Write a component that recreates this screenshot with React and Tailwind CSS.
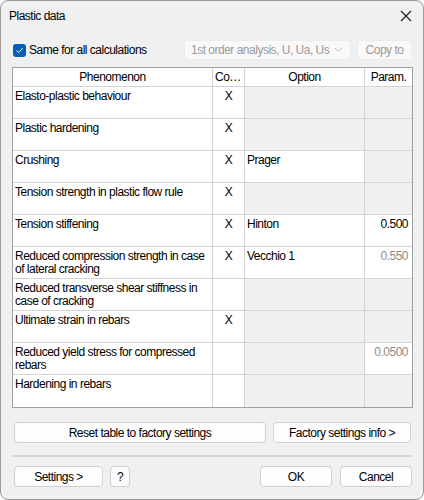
import React from "react";

const rows = [
  { name: "Elasto-plastic behaviour", co: true, option: null, param: null },
  { name: "Plastic hardening", co: true, option: null, param: null },
  { name: "Crushing", co: true, option: "Prager", param: null },
  { name: "Tension strength in plastic flow rule", co: true, option: null, param: null },
  { name: "Tension stiffening", co: true, option: "Hinton", param: "0.500" },
  { name: "Reduced compression strength in case of lateral cracking", co: true, option: "Vecchio 1", param: "0.550", paramDim: true },
  { name: "Reduced transverse shear stiffness in case of cracking", co: false, option: null, param: null },
  { name: "Ultimate strain in rebars", co: true, option: null, param: null },
  { name: "Reduced yield stress for compressed rebars", co: false, option: null, param: "0.0500", paramDim: true },
  { name: "Hardening in rebars", co: false, option: null, param: null },
];

const Btn = ({ children, className = "" }) => (
  <button className={`h-[21px] bg-[#fdfdfd] border border-[#d0d0d0] rounded-[4px] text-[12px] text-black leading-none ${className}`}>
    {children}
  </button>
);

export default function App() {
  return (
    <div className="w-[424px] h-[500px] bg-white tracking-[-0.5px]" style={{ fontFamily: '"Liberation Sans", Arial, sans-serif' }}>
      <div className="w-full h-full bg-[#f0f0f0] border border-[#9a9a9a] rounded-[8px] flex flex-col overflow-hidden">
        {/* title bar */}
        <div className="h-[30px] flex items-center justify-between pl-[8px] pr-[10px] shrink-0">
          <span className="text-[12px] text-black">Plastic data</span>
          <svg width="12" height="12" viewBox="0 0 12 12" className="mr-[1px]">
            <path d="M1 1 L11 11 M11 1 L1 11" stroke="#1a1a1a" strokeWidth="1.1" />
          </svg>
        </div>

        <div className="flex-1 flex flex-col px-[11px]">
          {/* options row */}
          <div className="flex items-center mt-[9px] h-[20px]">
            <div className="w-[13px] h-[13px] rounded-[3px] bg-[#005fb8] flex items-center justify-center ml-[1px]">
              <svg width="9" height="9" viewBox="0 0 9 9">
                <path d="M1.5 4.6 L3.6 6.6 L7.6 2.2" fill="none" stroke="white" strokeWidth="1" />
              </svg>
            </div>
            <span className="text-[12px] text-black ml-[3px]">Same for all calculations</span>
            <div className="ml-auto flex items-center gap-[6px]">
              <div className="w-[167px] h-[20px] bg-[#f9f9f9] border border-[#ececec] rounded-[3px] flex items-center justify-between pl-[6px] pr-[7px]">
                <span className="text-[12px] text-[#9a9a9a] whitespace-nowrap">1st order analysis, U, Ua, Us</span>
                <svg width="9" height="6" viewBox="0 0 9 6">
                  <path d="M1 1 L4.5 4.5 L8 1" fill="none" stroke="#b8b8b8" strokeWidth="1" />
                </svg>
              </div>
              <div className="w-[55px] h-[20px] bg-[#f9f9f9] border border-[#ececec] rounded-[3px] flex items-center justify-center">
                <span className="text-[12px] text-[#9a9a9a]">Copy to</span>
              </div>
            </div>
          </div>

          {/* table */}
          <div className="mt-[7px] w-[401px] border border-[#a0a0a0] bg-white">
            <div className="grid grid-cols-[200px_32px_120px_47px] h-[19px] border-b border-[#d4d4d4] text-[12px] text-black">
              <div className="flex items-center justify-center border-r border-[#d4d4d4]">Phenomenon</div>
              <div className="flex items-center pl-[2px] border-r border-[#d4d4d4]">Co…</div>
              <div className="flex items-center justify-center border-r border-[#d4d4d4]">Option</div>
              <div className="flex items-center justify-center">Param.</div>
            </div>
            {rows.map((r, i) => (
              <div
                key={r.name}
                className={`grid grid-cols-[200px_32px_120px_47px] h-[32px] text-[12px] text-black leading-[13px] ${i < rows.length - 1 ? "border-b border-[#d4d4d4]" : ""}`}
              >
                <div className="bg-white border-r border-[#d4d4d4] pl-[2px] pt-[3px] pr-[4px]">{r.name}</div>
                <div className="bg-white border-r border-[#d4d4d4] pt-[3px] text-center">{r.co ? "X" : ""}</div>
                <div className={`${r.option ? "bg-white" : "bg-[#f0f0f0]"} border-r border-[#d4d4d4] pl-[2px] pt-[3px]`}>{r.option}</div>
                <div className={`${r.param ? "bg-white" : "bg-[#f0f0f0]"} pt-[3px] pr-[4px] text-right ${r.paramDim ? "text-[#8c8c8c]" : ""}`}>{r.param}</div>
              </div>
            ))}
          </div>

          {/* factory buttons */}
          <div className="flex mt-[14px] pl-[2px] gap-[7px]">
            <Btn className="w-[252px]">Reset table to factory settings</Btn>
            <Btn className="w-[138px]">Factory settings info &gt;</Btn>
          </div>

          <div className="mt-[12px] h-[2px] bg-[#d4d4d4] mx-[1px]" />

          {/* bottom buttons */}
          <div className="flex mt-[9px] pl-[2px]">
            <Btn className="w-[89px]">Settings &gt;</Btn>
            <Btn className="w-[20px] ml-[7px]">?</Btn>
            <Btn className="w-[72px] ml-auto">OK</Btn>
            <Btn className="w-[72px] ml-[8px]">Cancel</Btn>
          </div>
        </div>
      </div>
    </div>
  );
}
